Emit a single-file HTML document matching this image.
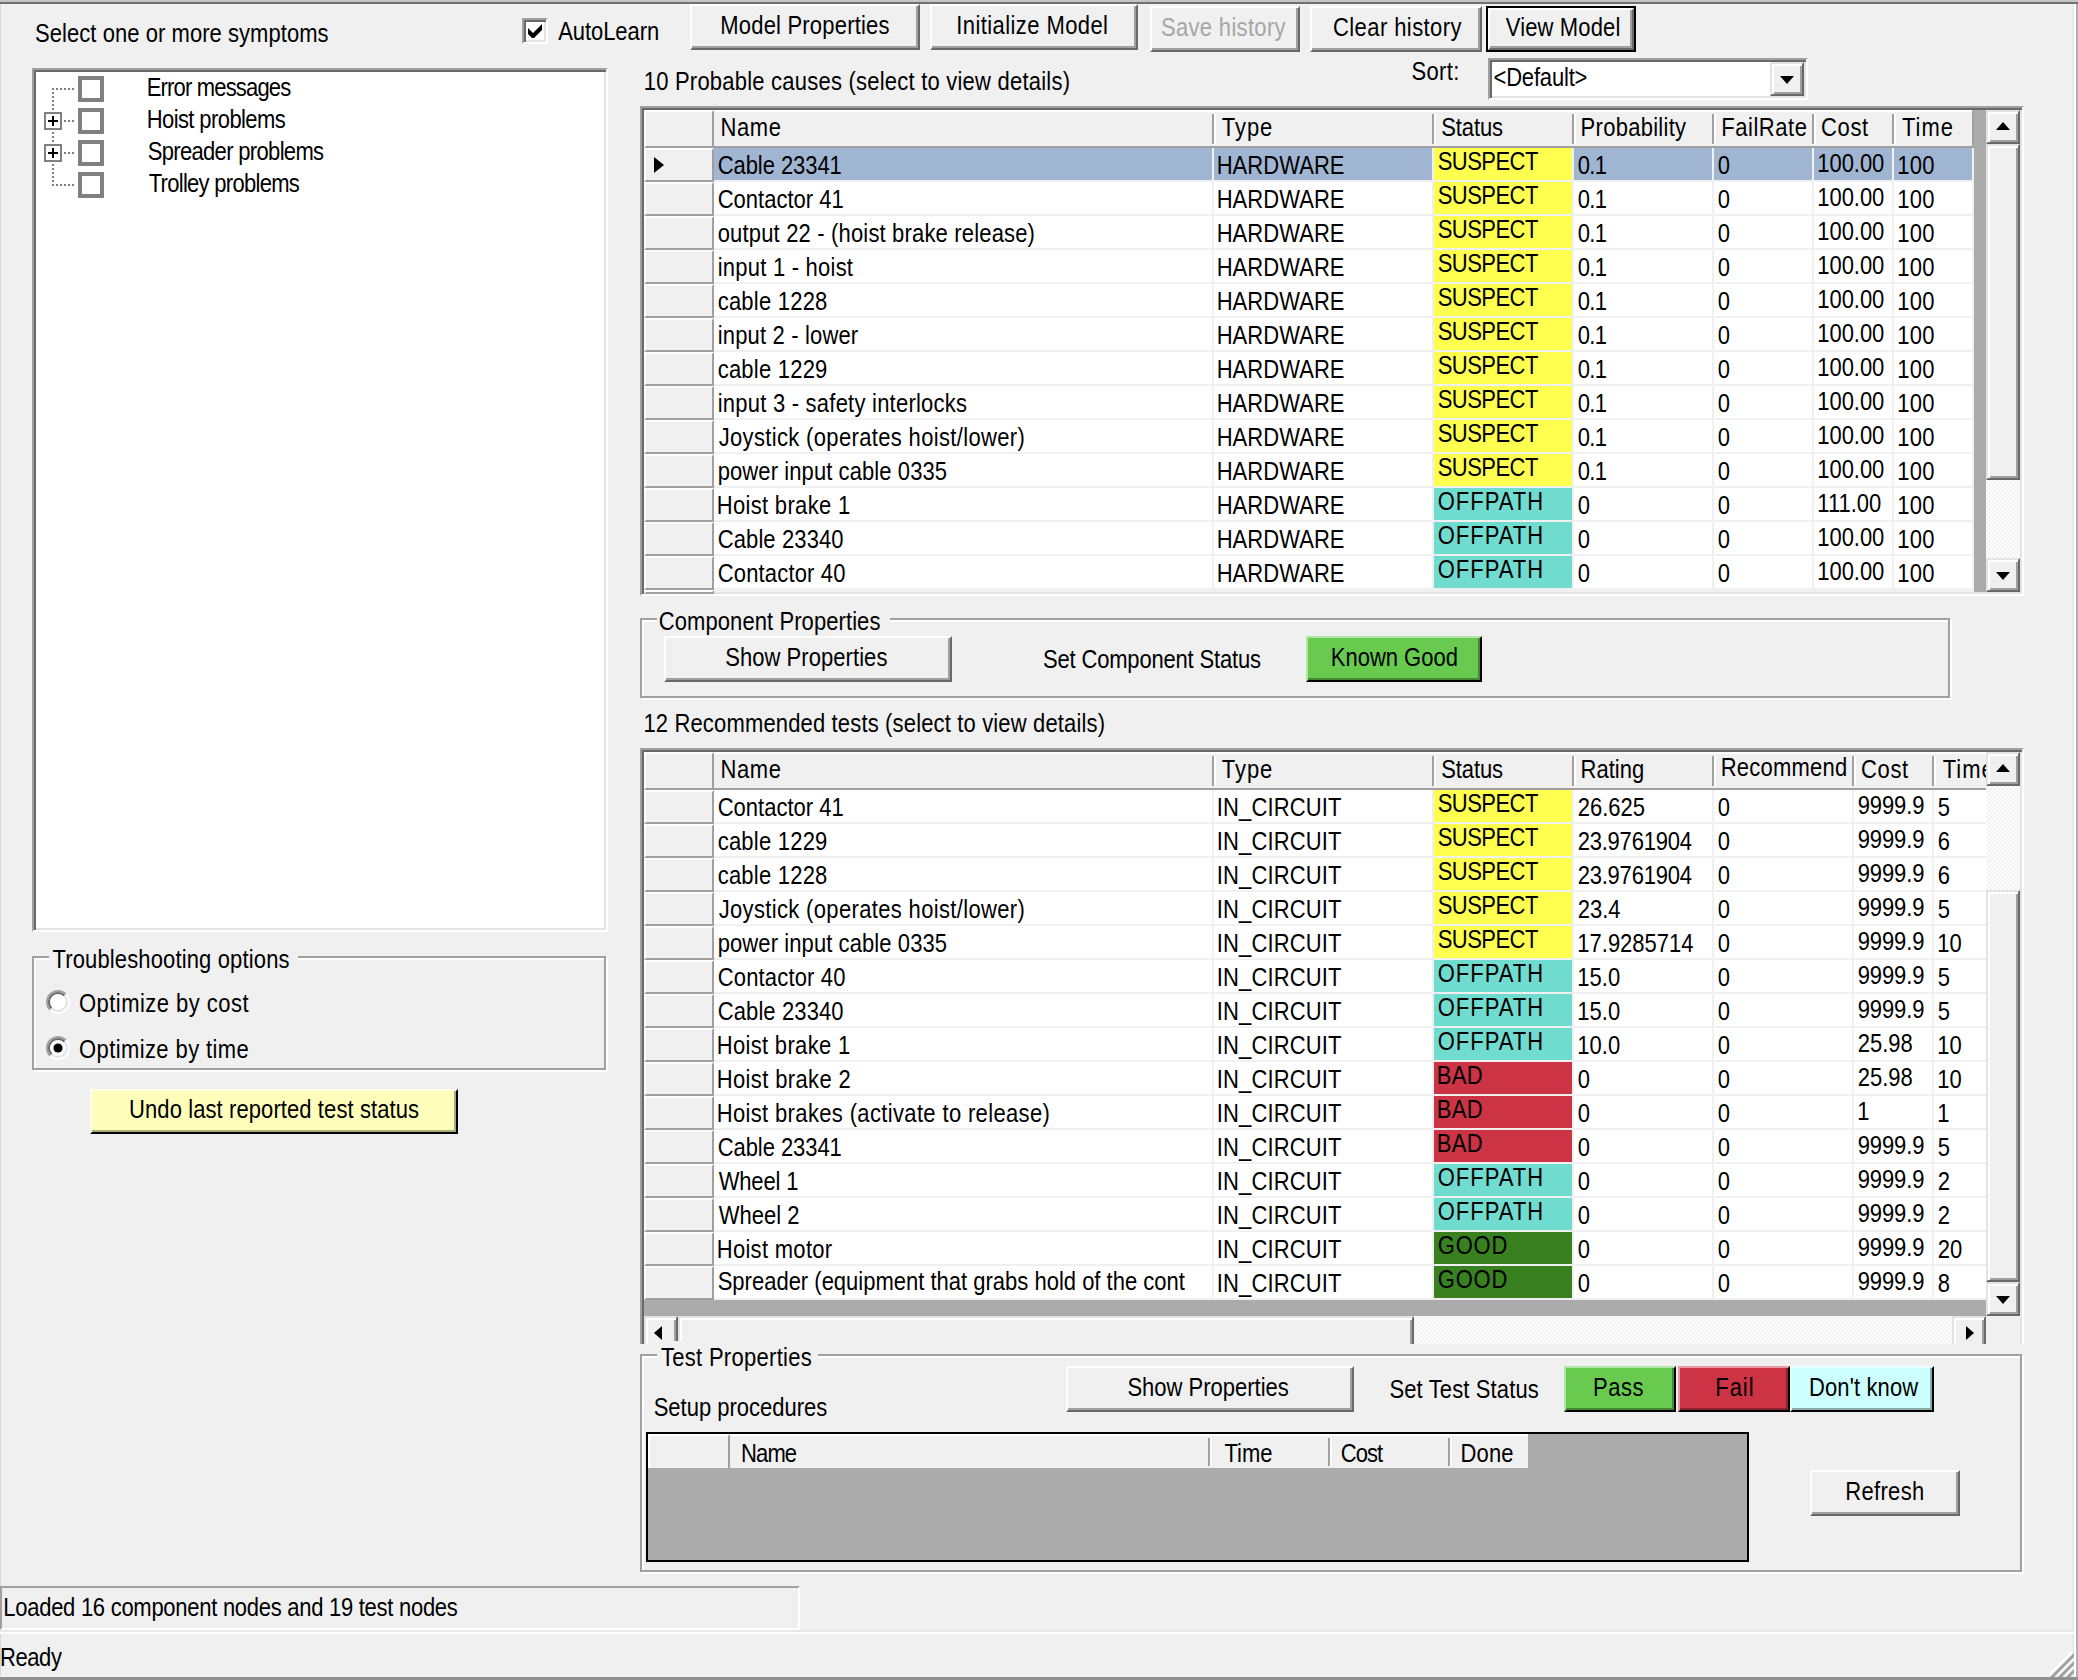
<!DOCTYPE html>
<html lang="en"><head><meta charset="utf-8"><title>Troubleshooter</title>
<style>
html,body{margin:0;padding:0;}
body{width:2078px;height:1680px;overflow:hidden;background:#f0f0f0;position:relative;
 font-family:"Liberation Sans",sans-serif;font-size:22px;color:#000;}
div,span{position:absolute;box-sizing:border-box;}
.t{white-space:pre;line-height:26px;height:26px;transform:scaleY(1.14);transform-origin:0 20px;}
.btn{background:#f0f0f0;border-style:solid;border-width:2px;border-color:#fff #696969 #696969 #fff;
 box-shadow:inset -2px -2px 0 #a0a0a0;}
.sunk{border-style:solid;border-width:2px;border-color:#a0a0a0 #fff #fff #a0a0a0;
 box-shadow:inset 2px 2px 0 #696969, inset -2px -2px 0 #e3e3e3;}
.grp{border:2px solid #a0a0a0;box-shadow:2px 2px 0 #fff, inset 2px 2px 0 #fff;}
.cap{background:#f0f0f0;}
.sb{background:#f0f0f0;border-style:solid;border-width:2px;border-color:#e3e3e3 #696969 #696969 #e3e3e3;
 box-shadow:inset 2px 2px 0 #fff, inset -2px -2px 0 #a0a0a0;}
.trk{background:#f8f8f8 repeating-conic-gradient(#fcfcfc 0 25%,#f3f3f3 0 50%) 0 0/4px 4px;}
.hc{background:#f0f0f0;}
.sep{width:4px;border-left:2px solid #a0a0a0;border-right:2px solid #fff;}
.rh{background:#f0f0f0;border-top:2px solid #fff;border-left:2px solid #fff;border-bottom:2px solid #a0a0a0;border-right:2px solid #a0a0a0;}
.cell{background:#fff;border-right:2px solid #f0f0f0;border-bottom:2px solid #f0f0f0;}
.sel{background:#a0b5d1;}
.SUSPECT{background:#ffff50;}
.OFFPATH{background:#70dcd0;}
.BAD{background:#cc3344;}
.GOOD{background:#388020;}
svg{position:absolute;overflow:visible;}
</style></head><body>

<div style="left:0px;top:0px;width:2078px;height:2px;background:#c4c4c4;"></div>
<div style="left:0px;top:2px;width:2078px;height:2px;background:#707070;"></div>
<div style="left:0px;top:4px;width:1px;height:1672px;background:#d8d8d8;"></div>
<div style="left:0px;top:1677px;width:2078px;height:3px;background:#909090;"></div>
<div style="left:2072px;top:4px;width:2px;height:1673px;background:#e8e8e8;"></div>
<div style="left:2074px;top:4px;width:2px;height:1673px;background:#fff;"></div>
<div style="left:2076px;top:4px;width:2px;height:1673px;background:#b0b0b0;"></div>
<div style="left:0px;top:1630px;width:2074px;height:2px;background:#e8e8e8;"></div>
<div style="left:0px;top:1632px;width:2074px;height:2px;background:#fff;"></div>
<span class="t" style="left:35px;letter-spacing:0.054px;top:22px;">Select one or more symptoms</span>
<div class="sunk" style="left:522px;top:18px;width:26px;height:26px;background:#fff;"></div>
<svg style="left:528px;top:24px" width="14" height="14" viewBox="0 0 7 7"><path d="M0 2L2.5 4.5L7 0V3L3 7H2L0 5z" fill="#000"/></svg>
<span class="t" style="left:558.2px;letter-spacing:-0.062px;top:20px;">AutoLearn</span>
<div class="btn" style="left:690px;top:4px;width:230px;height:46px;"></div>
<span class="t" style="left:720.3px;letter-spacing:0.193px;top:14px;">Model Properties</span>
<div class="btn" style="left:930px;top:4px;width:208px;height:46px;"></div>
<span class="t" style="left:956.2px;letter-spacing:0.42px;top:14px;">Initialize Model</span>
<div class="btn" style="left:1150px;top:6px;width:150px;height:46px;"></div>
<span class="t" style="left:1161px;letter-spacing:0.318px;top:16px;color:#a6a6a6">Save history</span>
<div class="btn" style="left:1310px;top:6px;width:172px;height:46px;"></div>
<span class="t" style="left:1333px;letter-spacing:0.417px;top:16px;">Clear history</span>
<div style="left:1486px;top:6px;width:150px;height:46px;background:#000;"></div>
<div class="btn" style="left:1488px;top:8px;width:146px;height:42px;"></div>
<span class="t" style="left:1505.8px;letter-spacing:0.133px;top:16px;">View Model</span>
<span class="t" style="left:643.7px;letter-spacing:0.221px;top:70px;">10 Probable causes (select to view details)</span>
<span class="t" style="left:1411.4px;letter-spacing:0.4px;top:60px;">Sort:</span>
<div class="sunk" style="left:1488px;top:58px;width:320px;height:42px;background:#fff;"></div>
<div class="sb" style="left:1770px;top:62px;width:34px;height:34px;"></div>
<svg style="left:1780px;top:76px" width="14" height="8" viewBox="0 0 14 8"><path d="M0 0h14l-7 8z" fill="#000"/></svg>
<span class="t" style="left:1493.5px;letter-spacing:-0.188px;top:66px;">&lt;Default&gt;</span>
<div class="sunk" style="left:32px;top:68px;width:576px;height:864px;background:#fff;"></div>
<div style="left:52px;top:88px;width:2px;height:98px;background:repeating-linear-gradient(to bottom,#808080 0 2px,transparent 2px 4px);"></div>
<div style="left:52px;top:88px;width:24px;height:2px;background:repeating-linear-gradient(to right,#808080 0 2px,transparent 2px 4px);"></div>
<div style="left:78px;top:76px;width:26px;height:26px;background:#fff;border:4px solid #808080;"></div>
<span class="t" style="left:146.7px;letter-spacing:-0.823px;top:76px;">Error messages</span>
<div style="left:44px;top:112px;width:18px;height:18px;background:#fff;border:2px solid #808080;"></div>
<div style="left:48px;top:120px;width:10px;height:2px;background:#000;"></div>
<div style="left:52px;top:116px;width:2px;height:10px;background:#000;"></div>
<div style="left:64px;top:120px;width:12px;height:2px;background:repeating-linear-gradient(to right,#808080 0 2px,transparent 2px 4px);"></div>
<div style="left:78px;top:108px;width:26px;height:26px;background:#fff;border:4px solid #808080;"></div>
<span class="t" style="left:146.7px;letter-spacing:-0.592px;top:108px;">Hoist problems</span>
<div style="left:44px;top:144px;width:18px;height:18px;background:#fff;border:2px solid #808080;"></div>
<div style="left:48px;top:152px;width:10px;height:2px;background:#000;"></div>
<div style="left:52px;top:148px;width:2px;height:10px;background:#000;"></div>
<div style="left:64px;top:152px;width:12px;height:2px;background:repeating-linear-gradient(to right,#808080 0 2px,transparent 2px 4px);"></div>
<div style="left:78px;top:140px;width:26px;height:26px;background:#fff;border:4px solid #808080;"></div>
<span class="t" style="left:147.7px;letter-spacing:-0.669px;top:140px;">Spreader problems</span>
<div style="left:52px;top:184px;width:24px;height:2px;background:repeating-linear-gradient(to right,#808080 0 2px,transparent 2px 4px);"></div>
<div style="left:78px;top:172px;width:26px;height:26px;background:#fff;border:4px solid #808080;"></div>
<span class="t" style="left:148.7px;letter-spacing:-0.713px;top:172px;">Trolley problems</span>
<div class="grp" style="left:32px;top:956px;width:574px;height:114px;"></div>
<div class="cap" style="left:49px;top:945px;width:249px;height:26px;"></div>
<span class="t" style="left:52.5px;letter-spacing:0.136px;top:948px;">Troubleshooting options</span>
<svg style="left:46px;top:990px" width="24" height="24" viewBox="0 0 24 24"><circle cx="12" cy="12" r="10" fill="#fff"/><path d="M4.2 19.8A11 11 0 0 1 19.8 4.2" fill="none" stroke="#a0a0a0" stroke-width="2"/><path d="M5.6 18.4A9 9 0 0 1 18.4 5.6" fill="none" stroke="#696969" stroke-width="2"/><path d="M19.8 4.2A11 11 0 0 1 4.2 19.8" fill="none" stroke="#fff" stroke-width="2"/><path d="M18.4 5.6A9 9 0 0 1 5.6 18.4" fill="none" stroke="#e3e3e3" stroke-width="2"/></svg>
<span class="t" style="left:79px;letter-spacing:0.467px;top:992px;">Optimize by cost</span>
<svg style="left:46px;top:1036px" width="24" height="24" viewBox="0 0 24 24"><circle cx="12" cy="12" r="10" fill="#fff"/><path d="M4.2 19.8A11 11 0 0 1 19.8 4.2" fill="none" stroke="#a0a0a0" stroke-width="2"/><path d="M5.6 18.4A9 9 0 0 1 18.4 5.6" fill="none" stroke="#696969" stroke-width="2"/><path d="M19.8 4.2A11 11 0 0 1 4.2 19.8" fill="none" stroke="#fff" stroke-width="2"/><path d="M18.4 5.6A9 9 0 0 1 5.6 18.4" fill="none" stroke="#e3e3e3" stroke-width="2"/><circle cx="12" cy="12" r="4.6" fill="#000"/></svg>
<span class="t" style="left:79px;letter-spacing:0.4px;top:1038px;">Optimize by time</span>
<div style="left:90px;top:1089px;width:368px;height:45px;background:#ffffbb;border-style:solid;border-width:2px;border-color:#ffffe8 #000 #000 #ffffe8;box-shadow:inset -2px -2px 0 #aaaa7c;"></div>
<span class="t" style="left:129px;letter-spacing:0.093px;top:1098px;">Undo last reported test status</span>
<div class="sunk" style="left:640px;top:106px;width:1384px;height:490px;background:#ababab;"></div>
<div class="hc" style="left:644px;top:110px;width:1328px;height:36px;border-top:2px solid #fff;"></div>
<div style="left:644px;top:146px;width:1328px;height:2px;background:#a0a0a0;"></div>
<div class="rh" style="left:644px;top:110px;width:70px;height:38px;"></div>
<div class="sep" style="left:1212px;top:114px;width:4px;height:30px;"></div>
<span class="t" style="left:720.4px;letter-spacing:0.6px;top:116px;">Name</span>
<div class="sep" style="left:1432px;top:114px;width:4px;height:30px;"></div>
<span class="t" style="left:1221.8px;letter-spacing:0.933px;top:116px;">Type</span>
<div class="sep" style="left:1572px;top:114px;width:4px;height:30px;"></div>
<span class="t" style="left:1441.3px;letter-spacing:-0.12px;top:116px;">Status</span>
<div class="sep" style="left:1712px;top:114px;width:4px;height:30px;"></div>
<span class="t" style="left:1580.6px;letter-spacing:0.27px;top:116px;">Probability</span>
<div class="sep" style="left:1812px;top:114px;width:4px;height:30px;"></div>
<span class="t" style="left:1721.2px;letter-spacing:0.543px;top:116px;">FailRate</span>
<div class="sep" style="left:1892px;top:114px;width:4px;height:30px;"></div>
<span class="t" style="left:1821px;letter-spacing:0.667px;top:116px;">Cost</span>
<div style="left:1972px;top:114px;width:2px;height:30px;background:#a0a0a0;"></div>
<span class="t" style="left:1902px;letter-spacing:1.0px;top:116px;">Time</span>
<div class="rh" style="left:644px;top:148px;width:70px;height:34px;"></div>
<div class="cell sel" style="left:714px;top:148px;width:500px;height:34px;"></div>
<span class="t" style="left:717.7px;letter-spacing:-0.06px;top:154px;">Cable 23341</span>
<div class="cell sel" style="left:1214px;top:148px;width:220px;height:34px;"></div>
<span class="t" style="left:1216.7px;letter-spacing:0.043px;top:154px;">HARDWARE</span>
<div class="cell SUSPECT" style="left:1434px;top:148px;width:140px;height:34px;"></div>
<span class="t" style="left:1437.7px;letter-spacing:-0.533px;top:150px;">SUSPECT</span>
<div class="cell sel" style="left:1574px;top:148px;width:140px;height:34px;"></div>
<span class="t" style="left:1577.7px;letter-spacing:-0.65px;top:154px;">0.1</span>
<div class="cell sel" style="left:1714px;top:148px;width:100px;height:34px;"></div>
<span class="t" style="left:1717.7px;top:154px;">0</span>
<div class="cell sel" style="left:1814px;top:148px;width:80px;height:34px;"></div>
<span class="t" style="left:1817.3px;letter-spacing:-0.06px;top:152px;">100.00</span>
<div class="cell sel" style="left:1894px;top:148px;width:80px;height:34px;"></div>
<span class="t" style="left:1897.3px;letter-spacing:0.25px;top:154px;">100</span>
<div class="rh" style="left:644px;top:182px;width:70px;height:34px;"></div>
<div class="cell" style="left:714px;top:182px;width:500px;height:34px;"></div>
<span class="t" style="left:717.7px;letter-spacing:0.009px;top:188px;">Contactor 41</span>
<div class="cell" style="left:1214px;top:182px;width:220px;height:34px;"></div>
<span class="t" style="left:1216.7px;letter-spacing:0.043px;top:188px;">HARDWARE</span>
<div class="cell SUSPECT" style="left:1434px;top:182px;width:140px;height:34px;"></div>
<span class="t" style="left:1437.7px;letter-spacing:-0.533px;top:184px;">SUSPECT</span>
<div class="cell" style="left:1574px;top:182px;width:140px;height:34px;"></div>
<span class="t" style="left:1577.7px;letter-spacing:-0.65px;top:188px;">0.1</span>
<div class="cell" style="left:1714px;top:182px;width:100px;height:34px;"></div>
<span class="t" style="left:1717.7px;top:188px;">0</span>
<div class="cell" style="left:1814px;top:182px;width:80px;height:34px;"></div>
<span class="t" style="left:1817.3px;letter-spacing:-0.06px;top:186px;">100.00</span>
<div class="cell" style="left:1894px;top:182px;width:80px;height:34px;"></div>
<span class="t" style="left:1897.3px;letter-spacing:0.25px;top:188px;">100</span>
<div class="rh" style="left:644px;top:216px;width:70px;height:34px;"></div>
<div class="cell" style="left:714px;top:216px;width:500px;height:34px;"></div>
<span class="t" style="left:717.7px;letter-spacing:0.169px;top:222px;">output 22 - (hoist brake release)</span>
<div class="cell" style="left:1214px;top:216px;width:220px;height:34px;"></div>
<span class="t" style="left:1216.7px;letter-spacing:0.043px;top:222px;">HARDWARE</span>
<div class="cell SUSPECT" style="left:1434px;top:216px;width:140px;height:34px;"></div>
<span class="t" style="left:1437.7px;letter-spacing:-0.533px;top:218px;">SUSPECT</span>
<div class="cell" style="left:1574px;top:216px;width:140px;height:34px;"></div>
<span class="t" style="left:1577.7px;letter-spacing:-0.65px;top:222px;">0.1</span>
<div class="cell" style="left:1714px;top:216px;width:100px;height:34px;"></div>
<span class="t" style="left:1717.7px;top:222px;">0</span>
<div class="cell" style="left:1814px;top:216px;width:80px;height:34px;"></div>
<span class="t" style="left:1817.3px;letter-spacing:-0.06px;top:220px;">100.00</span>
<div class="cell" style="left:1894px;top:216px;width:80px;height:34px;"></div>
<span class="t" style="left:1897.3px;letter-spacing:0.25px;top:222px;">100</span>
<div class="rh" style="left:644px;top:250px;width:70px;height:34px;"></div>
<div class="cell" style="left:714px;top:250px;width:500px;height:34px;"></div>
<span class="t" style="left:717.7px;letter-spacing:0.229px;top:256px;">input 1 - hoist</span>
<div class="cell" style="left:1214px;top:250px;width:220px;height:34px;"></div>
<span class="t" style="left:1216.7px;letter-spacing:0.043px;top:256px;">HARDWARE</span>
<div class="cell SUSPECT" style="left:1434px;top:250px;width:140px;height:34px;"></div>
<span class="t" style="left:1437.7px;letter-spacing:-0.533px;top:252px;">SUSPECT</span>
<div class="cell" style="left:1574px;top:250px;width:140px;height:34px;"></div>
<span class="t" style="left:1577.7px;letter-spacing:-0.65px;top:256px;">0.1</span>
<div class="cell" style="left:1714px;top:250px;width:100px;height:34px;"></div>
<span class="t" style="left:1717.7px;top:256px;">0</span>
<div class="cell" style="left:1814px;top:250px;width:80px;height:34px;"></div>
<span class="t" style="left:1817.3px;letter-spacing:-0.06px;top:254px;">100.00</span>
<div class="cell" style="left:1894px;top:250px;width:80px;height:34px;"></div>
<span class="t" style="left:1897.3px;letter-spacing:0.25px;top:256px;">100</span>
<div class="rh" style="left:644px;top:284px;width:70px;height:34px;"></div>
<div class="cell" style="left:714px;top:284px;width:500px;height:34px;"></div>
<span class="t" style="left:717.7px;letter-spacing:0.222px;top:290px;">cable 1228</span>
<div class="cell" style="left:1214px;top:284px;width:220px;height:34px;"></div>
<span class="t" style="left:1216.7px;letter-spacing:0.043px;top:290px;">HARDWARE</span>
<div class="cell SUSPECT" style="left:1434px;top:284px;width:140px;height:34px;"></div>
<span class="t" style="left:1437.7px;letter-spacing:-0.533px;top:286px;">SUSPECT</span>
<div class="cell" style="left:1574px;top:284px;width:140px;height:34px;"></div>
<span class="t" style="left:1577.7px;letter-spacing:-0.65px;top:290px;">0.1</span>
<div class="cell" style="left:1714px;top:284px;width:100px;height:34px;"></div>
<span class="t" style="left:1717.7px;top:290px;">0</span>
<div class="cell" style="left:1814px;top:284px;width:80px;height:34px;"></div>
<span class="t" style="left:1817.3px;letter-spacing:-0.06px;top:288px;">100.00</span>
<div class="cell" style="left:1894px;top:284px;width:80px;height:34px;"></div>
<span class="t" style="left:1897.3px;letter-spacing:0.25px;top:290px;">100</span>
<div class="rh" style="left:644px;top:318px;width:70px;height:34px;"></div>
<div class="cell" style="left:714px;top:318px;width:500px;height:34px;"></div>
<span class="t" style="left:717.7px;letter-spacing:0.164px;top:324px;">input 2 - lower</span>
<div class="cell" style="left:1214px;top:318px;width:220px;height:34px;"></div>
<span class="t" style="left:1216.7px;letter-spacing:0.043px;top:324px;">HARDWARE</span>
<div class="cell SUSPECT" style="left:1434px;top:318px;width:140px;height:34px;"></div>
<span class="t" style="left:1437.7px;letter-spacing:-0.533px;top:320px;">SUSPECT</span>
<div class="cell" style="left:1574px;top:318px;width:140px;height:34px;"></div>
<span class="t" style="left:1577.7px;letter-spacing:-0.65px;top:324px;">0.1</span>
<div class="cell" style="left:1714px;top:318px;width:100px;height:34px;"></div>
<span class="t" style="left:1717.7px;top:324px;">0</span>
<div class="cell" style="left:1814px;top:318px;width:80px;height:34px;"></div>
<span class="t" style="left:1817.3px;letter-spacing:-0.06px;top:322px;">100.00</span>
<div class="cell" style="left:1894px;top:318px;width:80px;height:34px;"></div>
<span class="t" style="left:1897.3px;letter-spacing:0.25px;top:324px;">100</span>
<div class="rh" style="left:644px;top:352px;width:70px;height:34px;"></div>
<div class="cell" style="left:714px;top:352px;width:500px;height:34px;"></div>
<span class="t" style="left:717.7px;letter-spacing:0.222px;top:358px;">cable 1229</span>
<div class="cell" style="left:1214px;top:352px;width:220px;height:34px;"></div>
<span class="t" style="left:1216.7px;letter-spacing:0.043px;top:358px;">HARDWARE</span>
<div class="cell SUSPECT" style="left:1434px;top:352px;width:140px;height:34px;"></div>
<span class="t" style="left:1437.7px;letter-spacing:-0.533px;top:354px;">SUSPECT</span>
<div class="cell" style="left:1574px;top:352px;width:140px;height:34px;"></div>
<span class="t" style="left:1577.7px;letter-spacing:-0.65px;top:358px;">0.1</span>
<div class="cell" style="left:1714px;top:352px;width:100px;height:34px;"></div>
<span class="t" style="left:1717.7px;top:358px;">0</span>
<div class="cell" style="left:1814px;top:352px;width:80px;height:34px;"></div>
<span class="t" style="left:1817.3px;letter-spacing:-0.06px;top:356px;">100.00</span>
<div class="cell" style="left:1894px;top:352px;width:80px;height:34px;"></div>
<span class="t" style="left:1897.3px;letter-spacing:0.25px;top:358px;">100</span>
<div class="rh" style="left:644px;top:386px;width:70px;height:34px;"></div>
<div class="cell" style="left:714px;top:386px;width:500px;height:34px;"></div>
<span class="t" style="left:717.7px;letter-spacing:0.231px;top:392px;">input 3 - safety interlocks</span>
<div class="cell" style="left:1214px;top:386px;width:220px;height:34px;"></div>
<span class="t" style="left:1216.7px;letter-spacing:0.043px;top:392px;">HARDWARE</span>
<div class="cell SUSPECT" style="left:1434px;top:386px;width:140px;height:34px;"></div>
<span class="t" style="left:1437.7px;letter-spacing:-0.533px;top:388px;">SUSPECT</span>
<div class="cell" style="left:1574px;top:386px;width:140px;height:34px;"></div>
<span class="t" style="left:1577.7px;letter-spacing:-0.65px;top:392px;">0.1</span>
<div class="cell" style="left:1714px;top:386px;width:100px;height:34px;"></div>
<span class="t" style="left:1717.7px;top:392px;">0</span>
<div class="cell" style="left:1814px;top:386px;width:80px;height:34px;"></div>
<span class="t" style="left:1817.3px;letter-spacing:-0.06px;top:390px;">100.00</span>
<div class="cell" style="left:1894px;top:386px;width:80px;height:34px;"></div>
<span class="t" style="left:1897.3px;letter-spacing:0.25px;top:392px;">100</span>
<div class="rh" style="left:644px;top:420px;width:70px;height:34px;"></div>
<div class="cell" style="left:714px;top:420px;width:500px;height:34px;"></div>
<span class="t" style="left:718.7px;letter-spacing:0.343px;top:426px;">Joystick (operates hoist/lower)</span>
<div class="cell" style="left:1214px;top:420px;width:220px;height:34px;"></div>
<span class="t" style="left:1216.7px;letter-spacing:0.043px;top:426px;">HARDWARE</span>
<div class="cell SUSPECT" style="left:1434px;top:420px;width:140px;height:34px;"></div>
<span class="t" style="left:1437.7px;letter-spacing:-0.533px;top:422px;">SUSPECT</span>
<div class="cell" style="left:1574px;top:420px;width:140px;height:34px;"></div>
<span class="t" style="left:1577.7px;letter-spacing:-0.65px;top:426px;">0.1</span>
<div class="cell" style="left:1714px;top:420px;width:100px;height:34px;"></div>
<span class="t" style="left:1717.7px;top:426px;">0</span>
<div class="cell" style="left:1814px;top:420px;width:80px;height:34px;"></div>
<span class="t" style="left:1817.3px;letter-spacing:-0.06px;top:424px;">100.00</span>
<div class="cell" style="left:1894px;top:420px;width:80px;height:34px;"></div>
<span class="t" style="left:1897.3px;letter-spacing:0.25px;top:426px;">100</span>
<div class="rh" style="left:644px;top:454px;width:70px;height:34px;"></div>
<div class="cell" style="left:714px;top:454px;width:500px;height:34px;"></div>
<span class="t" style="left:717.7px;letter-spacing:0.09px;top:460px;">power input cable 0335</span>
<div class="cell" style="left:1214px;top:454px;width:220px;height:34px;"></div>
<span class="t" style="left:1216.7px;letter-spacing:0.043px;top:460px;">HARDWARE</span>
<div class="cell SUSPECT" style="left:1434px;top:454px;width:140px;height:34px;"></div>
<span class="t" style="left:1437.7px;letter-spacing:-0.533px;top:456px;">SUSPECT</span>
<div class="cell" style="left:1574px;top:454px;width:140px;height:34px;"></div>
<span class="t" style="left:1577.7px;letter-spacing:-0.65px;top:460px;">0.1</span>
<div class="cell" style="left:1714px;top:454px;width:100px;height:34px;"></div>
<span class="t" style="left:1717.7px;top:460px;">0</span>
<div class="cell" style="left:1814px;top:454px;width:80px;height:34px;"></div>
<span class="t" style="left:1817.3px;letter-spacing:-0.06px;top:458px;">100.00</span>
<div class="cell" style="left:1894px;top:454px;width:80px;height:34px;"></div>
<span class="t" style="left:1897.3px;letter-spacing:0.25px;top:460px;">100</span>
<div class="rh" style="left:644px;top:488px;width:70px;height:34px;"></div>
<div class="cell" style="left:714px;top:488px;width:500px;height:34px;"></div>
<span class="t" style="left:716.7px;letter-spacing:0.325px;top:494px;">Hoist brake 1</span>
<div class="cell" style="left:1214px;top:488px;width:220px;height:34px;"></div>
<span class="t" style="left:1216.7px;letter-spacing:0.043px;top:494px;">HARDWARE</span>
<div class="cell OFFPATH" style="left:1434px;top:488px;width:140px;height:34px;"></div>
<span class="t" style="left:1437.7px;letter-spacing:1.0px;top:490px;">OFFPATH</span>
<div class="cell" style="left:1574px;top:488px;width:140px;height:34px;"></div>
<span class="t" style="left:1577.7px;top:494px;">0</span>
<div class="cell" style="left:1714px;top:488px;width:100px;height:34px;"></div>
<span class="t" style="left:1717.7px;top:494px;">0</span>
<div class="cell" style="left:1814px;top:488px;width:80px;height:34px;"></div>
<span class="t" style="left:1817.3px;top:492px;">111.00</span>
<div class="cell" style="left:1894px;top:488px;width:80px;height:34px;"></div>
<span class="t" style="left:1897.3px;letter-spacing:0.25px;top:494px;">100</span>
<div class="rh" style="left:644px;top:522px;width:70px;height:34px;"></div>
<div class="cell" style="left:714px;top:522px;width:500px;height:34px;"></div>
<span class="t" style="left:717.7px;letter-spacing:0.11px;top:528px;">Cable 23340</span>
<div class="cell" style="left:1214px;top:522px;width:220px;height:34px;"></div>
<span class="t" style="left:1216.7px;letter-spacing:0.043px;top:528px;">HARDWARE</span>
<div class="cell OFFPATH" style="left:1434px;top:522px;width:140px;height:34px;"></div>
<span class="t" style="left:1437.7px;letter-spacing:1.0px;top:524px;">OFFPATH</span>
<div class="cell" style="left:1574px;top:522px;width:140px;height:34px;"></div>
<span class="t" style="left:1577.7px;top:528px;">0</span>
<div class="cell" style="left:1714px;top:522px;width:100px;height:34px;"></div>
<span class="t" style="left:1717.7px;top:528px;">0</span>
<div class="cell" style="left:1814px;top:522px;width:80px;height:34px;"></div>
<span class="t" style="left:1817.3px;letter-spacing:-0.06px;top:526px;">100.00</span>
<div class="cell" style="left:1894px;top:522px;width:80px;height:34px;"></div>
<span class="t" style="left:1897.3px;letter-spacing:0.25px;top:528px;">100</span>
<div class="rh" style="left:644px;top:556px;width:70px;height:34px;"></div>
<div class="cell" style="left:714px;top:556px;width:500px;height:34px;"></div>
<span class="t" style="left:717.7px;letter-spacing:0.164px;top:562px;">Contactor 40</span>
<div class="cell" style="left:1214px;top:556px;width:220px;height:34px;"></div>
<span class="t" style="left:1216.7px;letter-spacing:0.043px;top:562px;">HARDWARE</span>
<div class="cell OFFPATH" style="left:1434px;top:556px;width:140px;height:34px;"></div>
<span class="t" style="left:1437.7px;letter-spacing:1.0px;top:558px;">OFFPATH</span>
<div class="cell" style="left:1574px;top:556px;width:140px;height:34px;"></div>
<span class="t" style="left:1577.7px;top:562px;">0</span>
<div class="cell" style="left:1714px;top:556px;width:100px;height:34px;"></div>
<span class="t" style="left:1717.7px;top:562px;">0</span>
<div class="cell" style="left:1814px;top:556px;width:80px;height:34px;"></div>
<span class="t" style="left:1817.3px;letter-spacing:-0.06px;top:560px;">100.00</span>
<div class="cell" style="left:1894px;top:556px;width:80px;height:34px;"></div>
<span class="t" style="left:1897.3px;letter-spacing:0.25px;top:562px;">100</span>
<div class="rh" style="left:644px;top:590px;width:70px;height:2px;"></div>
<div class="cell" style="left:714px;top:590px;width:500px;height:2px;"></div>
<div class="cell" style="left:1214px;top:590px;width:220px;height:2px;"></div>
<div class="cell OFFPATH" style="left:1434px;top:590px;width:140px;height:2px;"></div>
<div class="cell" style="left:1574px;top:590px;width:140px;height:2px;"></div>
<div class="cell" style="left:1714px;top:590px;width:100px;height:2px;"></div>
<div class="cell" style="left:1814px;top:590px;width:80px;height:2px;"></div>
<div class="cell" style="left:1894px;top:590px;width:80px;height:2px;"></div>
<svg style="left:654px;top:157px" width="10" height="16" viewBox="0 0 10 16"><path d="M0 0l10 8l-10 8z" fill="#000"/></svg>
<div class="trk" style="left:1986px;top:110px;width:34px;height:482px;"></div>
<div class="sb" style="left:1986px;top:110px;width:34px;height:34px;"></div>
<svg style="left:1996px;top:122px" width="14" height="8" viewBox="0 0 14 8"><path d="M0 8h14l-7-8z" fill="#000"/></svg>
<div class="sb" style="left:1986px;top:558px;width:34px;height:34px;"></div>
<svg style="left:1996px;top:572px" width="14" height="8" viewBox="0 0 14 8"><path d="M0 0h14l-7 8z" fill="#000"/></svg>
<div class="sb" style="left:1986px;top:144px;width:34px;height:336px;"></div>
<div class="grp" style="left:640px;top:618px;width:1310px;height:80px;"></div>
<div class="cap" style="left:657px;top:606px;width:233px;height:26px;"></div>
<span class="t" style="left:658.8px;letter-spacing:0.079px;top:610px;">Component Properties</span>
<div class="btn" style="left:664px;top:636px;width:288px;height:46px;"></div>
<span class="t" style="left:725.2px;letter-spacing:0.057px;top:646px;">Show Properties</span>
<span class="t" style="left:1043px;letter-spacing:-0.179px;top:648px;">Set Component Status</span>
<div style="left:1306px;top:636px;width:176px;height:46px;background:#68cb50;border-style:solid;border-width:2px;border-color:#b3e5a7 #000 #000 #b3e5a7;box-shadow:inset -2px -2px 0 #458735;"></div>
<span class="t" style="left:1330.8px;letter-spacing:-0.011px;top:646px;">Known Good</span>
<span class="t" style="left:643.4px;letter-spacing:0.155px;top:712px;">12 Recommended tests (select to view details)</span>
<div style="left:636px;top:744px;width:1392px;height:600px;overflow:hidden;">
<div style="left:-636px;top:-744px;width:2078px;height:1680px;">
<div class="sunk" style="left:640px;top:748px;width:1384px;height:606px;background:#ababab;"></div>
<div class="hc" style="left:644px;top:752px;width:1368px;height:36px;border-top:2px solid #fff;"></div>
<div style="left:644px;top:788px;width:1368px;height:2px;background:#a0a0a0;"></div>
<div class="rh" style="left:644px;top:752px;width:70px;height:38px;"></div>
<div class="sep" style="left:1212px;top:756px;width:4px;height:30px;"></div>
<span class="t" style="left:720.4px;letter-spacing:0.6px;top:758px;">Name</span>
<div class="sep" style="left:1432px;top:756px;width:4px;height:30px;"></div>
<span class="t" style="left:1221.8px;letter-spacing:0.933px;top:758px;">Type</span>
<div class="sep" style="left:1572px;top:756px;width:4px;height:30px;"></div>
<span class="t" style="left:1441.3px;letter-spacing:-0.12px;top:758px;">Status</span>
<div class="sep" style="left:1712px;top:756px;width:4px;height:30px;"></div>
<span class="t" style="left:1580.6px;top:758px;">Rating</span>
<div class="sep" style="left:1852px;top:756px;width:4px;height:30px;"></div>
<span class="t" style="left:1720.7px;letter-spacing:0.225px;top:756px;">Recommend</span>
<div class="sep" style="left:1932px;top:756px;width:4px;height:30px;"></div>
<span class="t" style="left:1861px;letter-spacing:0.667px;top:758px;">Cost</span>
<div style="left:2012px;top:756px;width:2px;height:30px;background:#a0a0a0;"></div>
<span class="t" style="left:1942.7px;letter-spacing:1.0px;top:758px;">Time</span>
<div class="rh" style="left:644px;top:790px;width:70px;height:34px;"></div>
<div class="cell" style="left:714px;top:790px;width:500px;height:34px;"></div>
<span class="t" style="left:717.7px;letter-spacing:0.009px;top:796px;">Contactor 41</span>
<div class="cell" style="left:1214px;top:790px;width:220px;height:34px;"></div>
<span class="t" style="left:1216.7px;letter-spacing:0.156px;top:796px;">IN_CIRCUIT</span>
<div class="cell SUSPECT" style="left:1434px;top:790px;width:140px;height:34px;"></div>
<span class="t" style="left:1437.7px;letter-spacing:-0.533px;top:792px;">SUSPECT</span>
<div class="cell" style="left:1574px;top:790px;width:140px;height:34px;"></div>
<span class="t" style="left:1577.7px;top:796px;">26.625</span>
<div class="cell" style="left:1714px;top:790px;width:140px;height:34px;"></div>
<span class="t" style="left:1717.7px;top:796px;">0</span>
<div class="cell" style="left:1854px;top:790px;width:80px;height:34px;"></div>
<span class="t" style="left:1857.7px;letter-spacing:-0.1px;top:794px;">9999.9</span>
<div class="cell" style="left:1934px;top:790px;width:80px;height:34px;"></div>
<span class="t" style="left:1937.7px;top:796px;">5</span>
<div class="rh" style="left:644px;top:824px;width:70px;height:34px;"></div>
<div class="cell" style="left:714px;top:824px;width:500px;height:34px;"></div>
<span class="t" style="left:717.7px;letter-spacing:0.222px;top:830px;">cable 1229</span>
<div class="cell" style="left:1214px;top:824px;width:220px;height:34px;"></div>
<span class="t" style="left:1216.7px;letter-spacing:0.156px;top:830px;">IN_CIRCUIT</span>
<div class="cell SUSPECT" style="left:1434px;top:824px;width:140px;height:34px;"></div>
<span class="t" style="left:1437.7px;letter-spacing:-0.533px;top:826px;">SUSPECT</span>
<div class="cell" style="left:1574px;top:824px;width:140px;height:34px;"></div>
<span class="t" style="left:1577.7px;letter-spacing:-0.222px;top:830px;">23.9761904</span>
<div class="cell" style="left:1714px;top:824px;width:140px;height:34px;"></div>
<span class="t" style="left:1717.7px;top:830px;">0</span>
<div class="cell" style="left:1854px;top:824px;width:80px;height:34px;"></div>
<span class="t" style="left:1857.7px;letter-spacing:-0.1px;top:828px;">9999.9</span>
<div class="cell" style="left:1934px;top:824px;width:80px;height:34px;"></div>
<span class="t" style="left:1937.7px;top:830px;">6</span>
<div class="rh" style="left:644px;top:858px;width:70px;height:34px;"></div>
<div class="cell" style="left:714px;top:858px;width:500px;height:34px;"></div>
<span class="t" style="left:717.7px;letter-spacing:0.222px;top:864px;">cable 1228</span>
<div class="cell" style="left:1214px;top:858px;width:220px;height:34px;"></div>
<span class="t" style="left:1216.7px;letter-spacing:0.156px;top:864px;">IN_CIRCUIT</span>
<div class="cell SUSPECT" style="left:1434px;top:858px;width:140px;height:34px;"></div>
<span class="t" style="left:1437.7px;letter-spacing:-0.533px;top:860px;">SUSPECT</span>
<div class="cell" style="left:1574px;top:858px;width:140px;height:34px;"></div>
<span class="t" style="left:1577.7px;letter-spacing:-0.222px;top:864px;">23.9761904</span>
<div class="cell" style="left:1714px;top:858px;width:140px;height:34px;"></div>
<span class="t" style="left:1717.7px;top:864px;">0</span>
<div class="cell" style="left:1854px;top:858px;width:80px;height:34px;"></div>
<span class="t" style="left:1857.7px;letter-spacing:-0.1px;top:862px;">9999.9</span>
<div class="cell" style="left:1934px;top:858px;width:80px;height:34px;"></div>
<span class="t" style="left:1937.7px;top:864px;">6</span>
<div class="rh" style="left:644px;top:892px;width:70px;height:34px;"></div>
<div class="cell" style="left:714px;top:892px;width:500px;height:34px;"></div>
<span class="t" style="left:718.7px;letter-spacing:0.343px;top:898px;">Joystick (operates hoist/lower)</span>
<div class="cell" style="left:1214px;top:892px;width:220px;height:34px;"></div>
<span class="t" style="left:1216.7px;letter-spacing:0.156px;top:898px;">IN_CIRCUIT</span>
<div class="cell SUSPECT" style="left:1434px;top:892px;width:140px;height:34px;"></div>
<span class="t" style="left:1437.7px;letter-spacing:-0.533px;top:894px;">SUSPECT</span>
<div class="cell" style="left:1574px;top:892px;width:140px;height:34px;"></div>
<span class="t" style="left:1577.7px;top:898px;">23.4</span>
<div class="cell" style="left:1714px;top:892px;width:140px;height:34px;"></div>
<span class="t" style="left:1717.7px;top:898px;">0</span>
<div class="cell" style="left:1854px;top:892px;width:80px;height:34px;"></div>
<span class="t" style="left:1857.7px;letter-spacing:-0.1px;top:896px;">9999.9</span>
<div class="cell" style="left:1934px;top:892px;width:80px;height:34px;"></div>
<span class="t" style="left:1937.7px;top:898px;">5</span>
<div class="rh" style="left:644px;top:926px;width:70px;height:34px;"></div>
<div class="cell" style="left:714px;top:926px;width:500px;height:34px;"></div>
<span class="t" style="left:717.7px;letter-spacing:0.09px;top:932px;">power input cable 0335</span>
<div class="cell" style="left:1214px;top:926px;width:220px;height:34px;"></div>
<span class="t" style="left:1216.7px;letter-spacing:0.156px;top:932px;">IN_CIRCUIT</span>
<div class="cell SUSPECT" style="left:1434px;top:926px;width:140px;height:34px;"></div>
<span class="t" style="left:1437.7px;letter-spacing:-0.533px;top:928px;">SUSPECT</span>
<div class="cell" style="left:1574px;top:926px;width:140px;height:34px;"></div>
<span class="t" style="left:1577.3px;top:932px;">17.9285714</span>
<div class="cell" style="left:1714px;top:926px;width:140px;height:34px;"></div>
<span class="t" style="left:1717.7px;top:932px;">0</span>
<div class="cell" style="left:1854px;top:926px;width:80px;height:34px;"></div>
<span class="t" style="left:1857.7px;letter-spacing:-0.1px;top:930px;">9999.9</span>
<div class="cell" style="left:1934px;top:926px;width:80px;height:34px;"></div>
<span class="t" style="left:1937.3px;top:932px;">10</span>
<div class="rh" style="left:644px;top:960px;width:70px;height:34px;"></div>
<div class="cell" style="left:714px;top:960px;width:500px;height:34px;"></div>
<span class="t" style="left:717.7px;letter-spacing:0.164px;top:966px;">Contactor 40</span>
<div class="cell" style="left:1214px;top:960px;width:220px;height:34px;"></div>
<span class="t" style="left:1216.7px;letter-spacing:0.156px;top:966px;">IN_CIRCUIT</span>
<div class="cell OFFPATH" style="left:1434px;top:960px;width:140px;height:34px;"></div>
<span class="t" style="left:1437.7px;letter-spacing:1.0px;top:962px;">OFFPATH</span>
<div class="cell" style="left:1574px;top:960px;width:140px;height:34px;"></div>
<span class="t" style="left:1577.3px;top:966px;">15.0</span>
<div class="cell" style="left:1714px;top:960px;width:140px;height:34px;"></div>
<span class="t" style="left:1717.7px;top:966px;">0</span>
<div class="cell" style="left:1854px;top:960px;width:80px;height:34px;"></div>
<span class="t" style="left:1857.7px;letter-spacing:-0.1px;top:964px;">9999.9</span>
<div class="cell" style="left:1934px;top:960px;width:80px;height:34px;"></div>
<span class="t" style="left:1937.7px;top:966px;">5</span>
<div class="rh" style="left:644px;top:994px;width:70px;height:34px;"></div>
<div class="cell" style="left:714px;top:994px;width:500px;height:34px;"></div>
<span class="t" style="left:717.7px;letter-spacing:0.11px;top:1000px;">Cable 23340</span>
<div class="cell" style="left:1214px;top:994px;width:220px;height:34px;"></div>
<span class="t" style="left:1216.7px;letter-spacing:0.156px;top:1000px;">IN_CIRCUIT</span>
<div class="cell OFFPATH" style="left:1434px;top:994px;width:140px;height:34px;"></div>
<span class="t" style="left:1437.7px;letter-spacing:1.0px;top:996px;">OFFPATH</span>
<div class="cell" style="left:1574px;top:994px;width:140px;height:34px;"></div>
<span class="t" style="left:1577.3px;top:1000px;">15.0</span>
<div class="cell" style="left:1714px;top:994px;width:140px;height:34px;"></div>
<span class="t" style="left:1717.7px;top:1000px;">0</span>
<div class="cell" style="left:1854px;top:994px;width:80px;height:34px;"></div>
<span class="t" style="left:1857.7px;letter-spacing:-0.1px;top:998px;">9999.9</span>
<div class="cell" style="left:1934px;top:994px;width:80px;height:34px;"></div>
<span class="t" style="left:1937.7px;top:1000px;">5</span>
<div class="rh" style="left:644px;top:1028px;width:70px;height:34px;"></div>
<div class="cell" style="left:714px;top:1028px;width:500px;height:34px;"></div>
<span class="t" style="left:716.7px;letter-spacing:0.325px;top:1034px;">Hoist brake 1</span>
<div class="cell" style="left:1214px;top:1028px;width:220px;height:34px;"></div>
<span class="t" style="left:1216.7px;letter-spacing:0.156px;top:1034px;">IN_CIRCUIT</span>
<div class="cell OFFPATH" style="left:1434px;top:1028px;width:140px;height:34px;"></div>
<span class="t" style="left:1437.7px;letter-spacing:1.0px;top:1030px;">OFFPATH</span>
<div class="cell" style="left:1574px;top:1028px;width:140px;height:34px;"></div>
<span class="t" style="left:1577.3px;top:1034px;">10.0</span>
<div class="cell" style="left:1714px;top:1028px;width:140px;height:34px;"></div>
<span class="t" style="left:1717.7px;top:1034px;">0</span>
<div class="cell" style="left:1854px;top:1028px;width:80px;height:34px;"></div>
<span class="t" style="left:1857.7px;top:1032px;">25.98</span>
<div class="cell" style="left:1934px;top:1028px;width:80px;height:34px;"></div>
<span class="t" style="left:1937.3px;top:1034px;">10</span>
<div class="rh" style="left:644px;top:1062px;width:70px;height:34px;"></div>
<div class="cell" style="left:714px;top:1062px;width:500px;height:34px;"></div>
<span class="t" style="left:716.7px;letter-spacing:0.375px;top:1068px;">Hoist brake 2</span>
<div class="cell" style="left:1214px;top:1062px;width:220px;height:34px;"></div>
<span class="t" style="left:1216.7px;letter-spacing:0.156px;top:1068px;">IN_CIRCUIT</span>
<div class="cell BAD" style="left:1434px;top:1062px;width:140px;height:34px;"></div>
<span class="t" style="left:1436.7px;letter-spacing:0.3px;top:1064px;">BAD</span>
<div class="cell" style="left:1574px;top:1062px;width:140px;height:34px;"></div>
<span class="t" style="left:1577.7px;top:1068px;">0</span>
<div class="cell" style="left:1714px;top:1062px;width:140px;height:34px;"></div>
<span class="t" style="left:1717.7px;top:1068px;">0</span>
<div class="cell" style="left:1854px;top:1062px;width:80px;height:34px;"></div>
<span class="t" style="left:1857.7px;top:1066px;">25.98</span>
<div class="cell" style="left:1934px;top:1062px;width:80px;height:34px;"></div>
<span class="t" style="left:1937.3px;top:1068px;">10</span>
<div class="rh" style="left:644px;top:1096px;width:70px;height:34px;"></div>
<div class="cell" style="left:714px;top:1096px;width:500px;height:34px;"></div>
<span class="t" style="left:716.7px;letter-spacing:0.352px;top:1102px;">Hoist brakes (activate to release)</span>
<div class="cell" style="left:1214px;top:1096px;width:220px;height:34px;"></div>
<span class="t" style="left:1216.7px;letter-spacing:0.156px;top:1102px;">IN_CIRCUIT</span>
<div class="cell BAD" style="left:1434px;top:1096px;width:140px;height:34px;"></div>
<span class="t" style="left:1436.7px;letter-spacing:0.3px;top:1098px;">BAD</span>
<div class="cell" style="left:1574px;top:1096px;width:140px;height:34px;"></div>
<span class="t" style="left:1577.7px;top:1102px;">0</span>
<div class="cell" style="left:1714px;top:1096px;width:140px;height:34px;"></div>
<span class="t" style="left:1717.7px;top:1102px;">0</span>
<div class="cell" style="left:1854px;top:1096px;width:80px;height:34px;"></div>
<span class="t" style="left:1857.3px;top:1100px;">1</span>
<div class="cell" style="left:1934px;top:1096px;width:80px;height:34px;"></div>
<span class="t" style="left:1937.3px;top:1102px;">1</span>
<div class="rh" style="left:644px;top:1130px;width:70px;height:34px;"></div>
<div class="cell" style="left:714px;top:1130px;width:500px;height:34px;"></div>
<span class="t" style="left:717.7px;letter-spacing:-0.06px;top:1136px;">Cable 23341</span>
<div class="cell" style="left:1214px;top:1130px;width:220px;height:34px;"></div>
<span class="t" style="left:1216.7px;letter-spacing:0.156px;top:1136px;">IN_CIRCUIT</span>
<div class="cell BAD" style="left:1434px;top:1130px;width:140px;height:34px;"></div>
<span class="t" style="left:1436.7px;letter-spacing:0.3px;top:1132px;">BAD</span>
<div class="cell" style="left:1574px;top:1130px;width:140px;height:34px;"></div>
<span class="t" style="left:1577.7px;top:1136px;">0</span>
<div class="cell" style="left:1714px;top:1130px;width:140px;height:34px;"></div>
<span class="t" style="left:1717.7px;top:1136px;">0</span>
<div class="cell" style="left:1854px;top:1130px;width:80px;height:34px;"></div>
<span class="t" style="left:1857.7px;letter-spacing:-0.1px;top:1134px;">9999.9</span>
<div class="cell" style="left:1934px;top:1130px;width:80px;height:34px;"></div>
<span class="t" style="left:1937.7px;top:1136px;">5</span>
<div class="rh" style="left:644px;top:1164px;width:70px;height:34px;"></div>
<div class="cell" style="left:714px;top:1164px;width:500px;height:34px;"></div>
<span class="t" style="left:718.7px;letter-spacing:-0.167px;top:1170px;">Wheel 1</span>
<div class="cell" style="left:1214px;top:1164px;width:220px;height:34px;"></div>
<span class="t" style="left:1216.7px;letter-spacing:0.156px;top:1170px;">IN_CIRCUIT</span>
<div class="cell OFFPATH" style="left:1434px;top:1164px;width:140px;height:34px;"></div>
<span class="t" style="left:1437.7px;letter-spacing:1.0px;top:1166px;">OFFPATH</span>
<div class="cell" style="left:1574px;top:1164px;width:140px;height:34px;"></div>
<span class="t" style="left:1577.7px;top:1170px;">0</span>
<div class="cell" style="left:1714px;top:1164px;width:140px;height:34px;"></div>
<span class="t" style="left:1717.7px;top:1170px;">0</span>
<div class="cell" style="left:1854px;top:1164px;width:80px;height:34px;"></div>
<span class="t" style="left:1857.7px;letter-spacing:-0.1px;top:1168px;">9999.9</span>
<div class="cell" style="left:1934px;top:1164px;width:80px;height:34px;"></div>
<span class="t" style="left:1937.7px;top:1170px;">2</span>
<div class="rh" style="left:644px;top:1198px;width:70px;height:34px;"></div>
<div class="cell" style="left:714px;top:1198px;width:500px;height:34px;"></div>
<span class="t" style="left:718.7px;letter-spacing:0.0px;top:1204px;">Wheel 2</span>
<div class="cell" style="left:1214px;top:1198px;width:220px;height:34px;"></div>
<span class="t" style="left:1216.7px;letter-spacing:0.156px;top:1204px;">IN_CIRCUIT</span>
<div class="cell OFFPATH" style="left:1434px;top:1198px;width:140px;height:34px;"></div>
<span class="t" style="left:1437.7px;letter-spacing:1.0px;top:1200px;">OFFPATH</span>
<div class="cell" style="left:1574px;top:1198px;width:140px;height:34px;"></div>
<span class="t" style="left:1577.7px;top:1204px;">0</span>
<div class="cell" style="left:1714px;top:1198px;width:140px;height:34px;"></div>
<span class="t" style="left:1717.7px;top:1204px;">0</span>
<div class="cell" style="left:1854px;top:1198px;width:80px;height:34px;"></div>
<span class="t" style="left:1857.7px;letter-spacing:-0.1px;top:1202px;">9999.9</span>
<div class="cell" style="left:1934px;top:1198px;width:80px;height:34px;"></div>
<span class="t" style="left:1937.7px;top:1204px;">2</span>
<div class="rh" style="left:644px;top:1232px;width:70px;height:34px;"></div>
<div class="cell" style="left:714px;top:1232px;width:500px;height:34px;"></div>
<span class="t" style="left:716.7px;letter-spacing:0.3px;top:1238px;">Hoist motor</span>
<div class="cell" style="left:1214px;top:1232px;width:220px;height:34px;"></div>
<span class="t" style="left:1216.7px;letter-spacing:0.156px;top:1238px;">IN_CIRCUIT</span>
<div class="cell GOOD" style="left:1434px;top:1232px;width:140px;height:34px;"></div>
<span class="t" style="left:1437.7px;letter-spacing:0.833px;top:1234px;">GOOD</span>
<div class="cell" style="left:1574px;top:1232px;width:140px;height:34px;"></div>
<span class="t" style="left:1577.7px;top:1238px;">0</span>
<div class="cell" style="left:1714px;top:1232px;width:140px;height:34px;"></div>
<span class="t" style="left:1717.7px;top:1238px;">0</span>
<div class="cell" style="left:1854px;top:1232px;width:80px;height:34px;"></div>
<span class="t" style="left:1857.7px;letter-spacing:-0.1px;top:1236px;">9999.9</span>
<div class="cell" style="left:1934px;top:1232px;width:80px;height:34px;"></div>
<span class="t" style="left:1937.7px;top:1238px;">20</span>
<div class="rh" style="left:644px;top:1266px;width:70px;height:34px;"></div>
<div class="cell" style="left:714px;top:1266px;width:500px;height:34px;"></div>
<span class="t" style="left:717.7px;letter-spacing:0.0px;top:1270px;">Spreader (equipment that grabs hold of the cont</span>
<div class="cell" style="left:1214px;top:1266px;width:220px;height:34px;"></div>
<span class="t" style="left:1216.7px;letter-spacing:0.156px;top:1272px;">IN_CIRCUIT</span>
<div class="cell GOOD" style="left:1434px;top:1266px;width:140px;height:34px;"></div>
<span class="t" style="left:1437.7px;letter-spacing:0.833px;top:1268px;">GOOD</span>
<div class="cell" style="left:1574px;top:1266px;width:140px;height:34px;"></div>
<span class="t" style="left:1577.7px;top:1272px;">0</span>
<div class="cell" style="left:1714px;top:1266px;width:140px;height:34px;"></div>
<span class="t" style="left:1717.7px;top:1272px;">0</span>
<div class="cell" style="left:1854px;top:1266px;width:80px;height:34px;"></div>
<span class="t" style="left:1857.7px;letter-spacing:-0.1px;top:1270px;">9999.9</span>
<div class="cell" style="left:1934px;top:1266px;width:80px;height:34px;"></div>
<span class="t" style="left:1937.7px;top:1272px;">8</span>
<div style="left:644px;top:1300px;width:1342px;height:16px;background:#ababab;"></div>
<div class="trk" style="left:1986px;top:752px;width:34px;height:564px;"></div>
<div class="sb" style="left:1986px;top:752px;width:34px;height:34px;"></div>
<svg style="left:1996px;top:764px" width="14" height="8" viewBox="0 0 14 8"><path d="M0 8h14l-7-8z" fill="#000"/></svg>
<div class="sb" style="left:1986px;top:1282px;width:34px;height:34px;"></div>
<svg style="left:1996px;top:1296px" width="14" height="8" viewBox="0 0 14 8"><path d="M0 0h14l-7 8z" fill="#000"/></svg>
<div class="sb" style="left:1986px;top:890px;width:34px;height:392px;"></div>
<div class="trk" style="left:644px;top:1316px;width:1342px;height:34px;"></div>
<div class="sb" style="left:644px;top:1316px;width:34px;height:34px;"></div>
<svg style="left:654px;top:1326px" width="8" height="14" viewBox="0 0 8 14"><path d="M8 0v14l-8-7z" fill="#000"/></svg>
<div class="sb" style="left:1952px;top:1316px;width:34px;height:34px;"></div>
<svg style="left:1966px;top:1326px" width="8" height="14" viewBox="0 0 8 14"><path d="M0 0v14l8-7z" fill="#000"/></svg>
<div class="sb" style="left:678px;top:1316px;width:736px;height:34px;"></div>
<div style="left:1986px;top:1316px;width:34px;height:34px;background:#f0f0f0;"></div>
</div></div>
<div class="grp" style="left:640px;top:1354px;width:1382px;height:218px;"></div>
<div class="cap" style="left:657px;top:1341px;width:161px;height:26px;"></div>
<span class="t" style="left:661px;letter-spacing:0.286px;top:1346px;">Test Properties</span>
<span class="t" style="left:653.7px;letter-spacing:-0.013px;top:1396px;">Setup procedures</span>
<div class="btn" style="left:1066px;top:1366px;width:288px;height:46px;"></div>
<span class="t" style="left:1127.4px;letter-spacing:0.0px;top:1376px;">Show Properties</span>
<span class="t" style="left:1389.4px;letter-spacing:0.129px;top:1378px;">Set Test Status</span>
<div style="left:1564px;top:1366px;width:112px;height:46px;background:#68cb50;border-style:solid;border-width:2px;border-color:#b3e5a7 #000 #000 #b3e5a7;box-shadow:inset -2px -2px 0 #458735;"></div>
<span class="t" style="left:1593px;letter-spacing:0.533px;top:1376px;">Pass</span>
<div style="left:1678px;top:1366px;width:112px;height:46px;background:#cc3344;border-style:solid;border-width:2px;border-color:#e599a1 #000 #000 #e599a1;box-shadow:inset -2px -2px 0 #88222d;"></div>
<span class="t" style="left:1715.2px;letter-spacing:1.0px;top:1376px;">Fail</span>
<div style="left:1790px;top:1366px;width:144px;height:46px;background:#ccffff;border-style:solid;border-width:2px;border-color:#e5ffff #000 #000 #e5ffff;box-shadow:inset -2px -2px 0 #88aaaa;"></div>
<span class="t" style="left:1809px;letter-spacing:0.111px;top:1376px;">Don&#x27;t know</span>
<div class="btn" style="left:1810px;top:1470px;width:150px;height:46px;"></div>
<span class="t" style="left:1845.2px;letter-spacing:0.333px;top:1480px;">Refresh</span>
<div style="left:646px;top:1432px;width:1103px;height:130px;background:#ababab;border:2px solid #000;"></div>
<div class="hc" style="left:648px;top:1434px;width:880px;height:34px;border-top:2px solid #fff;"></div>
<div class="rh" style="left:648px;top:1434px;width:82px;height:34px;border-bottom:none;"></div>
<div class="sep" style="left:1208px;top:1438px;width:4px;height:28px;"></div>
<div class="sep" style="left:1328px;top:1438px;width:4px;height:28px;"></div>
<div class="sep" style="left:1448px;top:1438px;width:4px;height:28px;"></div>
<span class="t" style="left:741px;letter-spacing:-0.867px;top:1442px;">Name</span>
<span class="t" style="left:1224.4px;top:1442px;">Time</span>
<span class="t" style="left:1340.8px;letter-spacing:-1.0px;top:1442px;">Cost</span>
<span class="t" style="left:1460.5px;letter-spacing:0.167px;top:1442px;">Done</span>
<div style="left:0px;top:1586px;width:800px;height:44px;border-style:solid;border-width:2px;border-color:#a0a0a0 #fff #fff #a0a0a0;"></div>
<span class="t" style="left:3.3px;letter-spacing:-0.274px;top:1596px;">Loaded 16 component nodes and 19 test nodes</span>
<span class="t" style="left:0px;letter-spacing:-0.425px;top:1646px;">Ready</span>
<svg style="left:2050px;top:1652px;overflow:hidden" width="24" height="25" viewBox="0 0 24 25"><g stroke-width="2.2" stroke="#fff"><path d="M-1 23L23 -1M7 23L23 7M15 23L23 15"/></g><g stroke-width="3" stroke="#a0a0a0"><path d="M1 26L25 2M9 26L25 10M17 26L25 18"/></g></svg>
</body></html>
